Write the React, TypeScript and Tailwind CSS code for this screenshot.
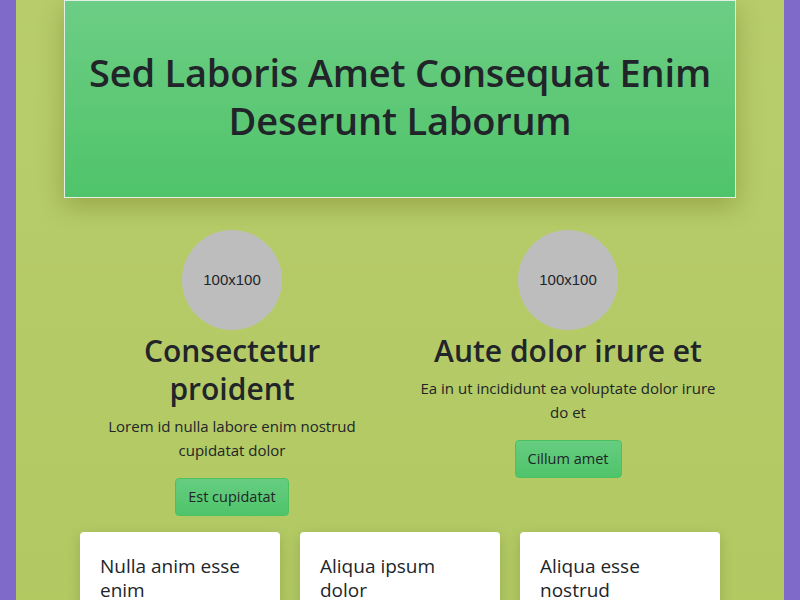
import React from 'react';

const features = [
  {
    title: 'Consectetur proident',
    text: 'Lorem id nulla labore enim nostrud cupidatat dolor',
    button: 'Est cupidatat',
  },
  {
    title: 'Aute dolor irure et',
    text: 'Ea in ut incididunt ea voluptate dolor irure do et',
    button: 'Cillum amet',
  },
];

const cards = ['Nulla anim esse enim', 'Aliqua ipsum dolor', 'Aliqua esse nostrud'];

export default function App() {
  return (
    <div
      className="min-h-screen bg-[#7f69c9] px-4 text-[#212529]"
      style={{ fontFamily: '"Open Sans", "Noto Sans", sans-serif' }}
    >
      <div className="min-h-screen bg-gradient-to-b from-[#b8cc6c] to-[#b2c962] px-12">
        {/* hero */}
        <div className="flex h-[198px] items-center justify-center border border-[#e4eee4] bg-gradient-to-b from-[#6ccd84] to-[#4fc46a] px-6 pb-1.5 shadow-[0_8px_24px_rgba(80,80,0,0.3)]">
          <h1 className="text-center text-[38px] leading-[48px] font-semibold tracking-[-0.2px]">
            Sed Laboris Amet Consequat Enim Deserunt Laborum
          </h1>
        </div>

        {/* features */}
        <div className="mt-8 grid grid-cols-2">
          {features.map((f) => (
            <div key={f.title} className="flex flex-col items-center px-4 text-center">
              <div
                className="flex h-[100px] w-[100px] items-center justify-center rounded-full bg-[#bdbdbd] text-[15px]"
                style={{ fontFamily: '"Liberation Sans", Arial, sans-serif' }}
              >
                100x100
              </div>
              <h2 className="mt-0.5 text-[30px] leading-[38px] font-semibold">{f.title}</h2>
              <p className="mt-1.5 max-w-[300px] text-[15px] leading-6">{f.text}</p>
              <button className="mt-4 h-[38px] rounded border border-[#4cc164] bg-gradient-to-b from-[#66cd81] to-[#4fc46a] px-3 text-[14.5px]">
                {f.button}
              </button>
            </div>
          ))}
        </div>

        {/* cards */}
        <div className="mt-4 grid grid-cols-3 gap-5 px-4">
          {cards.map((c) => (
            <div key={c} className="rounded bg-white px-5 pt-[22px] pb-5 shadow-[0_4px_14px_rgba(0,0,0,0.15)]">
              <h3 className="text-[19px] leading-6 font-medium">{c}</h3>
            </div>
          ))}
        </div>
      </div>
    </div>
  );
}
